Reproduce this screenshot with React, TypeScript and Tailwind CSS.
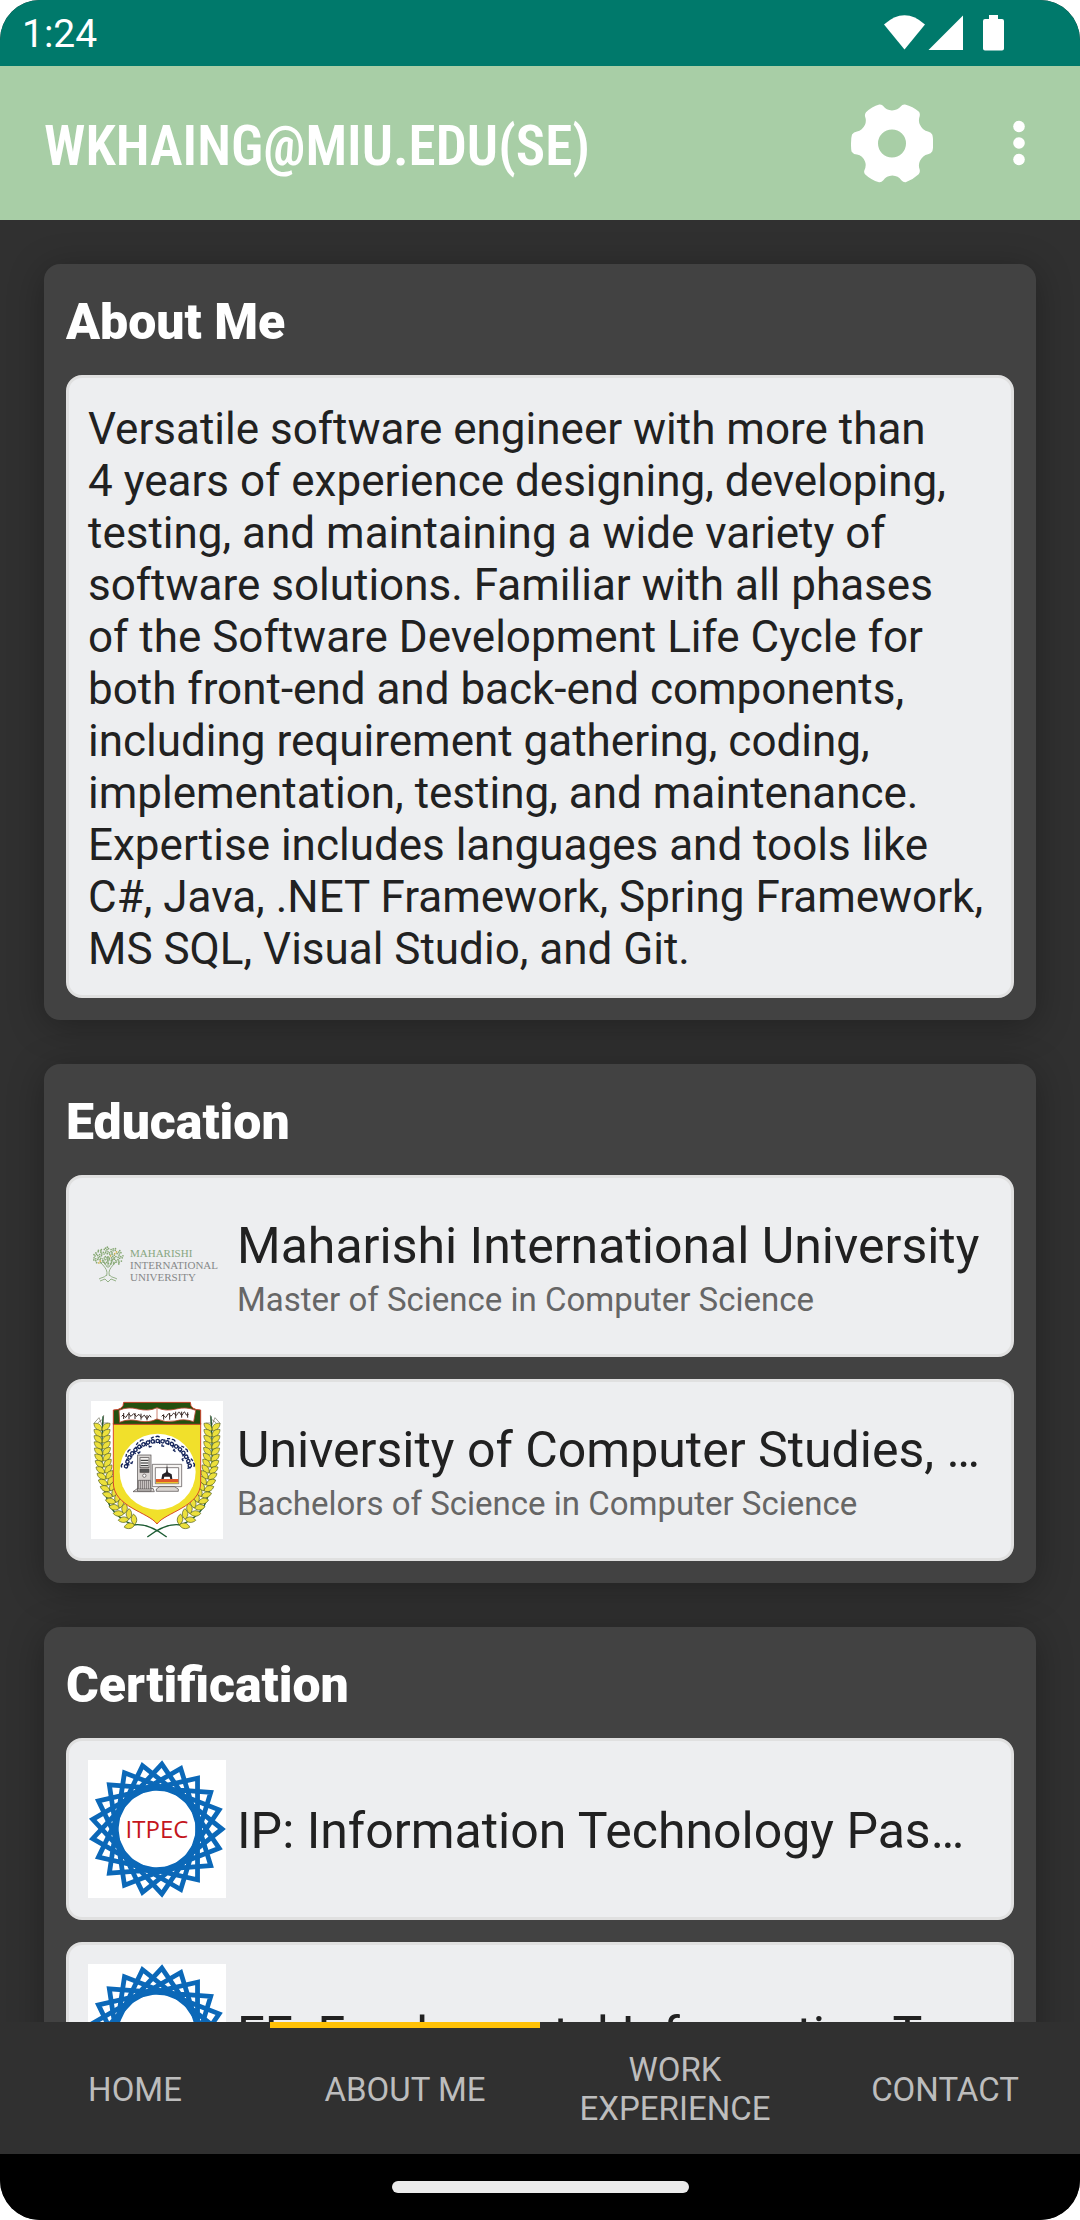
import type { ReactNode } from "react";

const aboutLines = [
  "Versatile software engineer with more than",
  "4 years of experience designing, developing,",
  "testing, and maintaining a wide variety of",
  "software solutions. Familiar with all phases",
  "of the Software Development Life Cycle for",
  "both front-end and back-end components,",
  "including requirement gathering, coding,",
  "implementation, testing, and maintenance.",
  "Expertise includes languages and tools like",
  "C#, Java, .NET Framework, Spring Framework,",
  "MS SQL, Visual Studio, and Git.",
];

/** Interlaced ring: three closed star polygons sharing 21 points. */
function starPath(start: number) {
  const points = Array.from({ length: 7 }, (_, i) => {
    const angle = ((start + i * 6) * 2 * Math.PI) / 21;
    return `${(69 + 65 * Math.cos(angle)).toFixed(2)} ${(69 + 65 * Math.sin(angle)).toFixed(2)}`;
  });
  return `M${points.join("L")}Z`;
}

function ItpecLogo() {
  return (
    <svg viewBox="0 0 138 138" className="size-[138px]" role="img" aria-label="ITPEC">
      <rect width="138" height="138" fill="#fff" />
      <g fill="none" stroke="#0b68b8" strokeWidth="4.8" strokeMiterlimit="10">
        {[0, 1, 2].map((s) => (
          <path key={s} d={starPath(s)} />
        ))}
        <circle cx="69" cy="69" r="42" strokeWidth="5" />
      </g>
      <text x="69" y="78" textAnchor="middle" fill="#c4161c" className="font-['Open_Sans',sans-serif] text-[24px] font-medium">
        ITPEC
      </text>
    </svg>
  );
}

const leafDots = Array.from({ length: 130 }, (_, i) => {
  const t = (i * 137.5 * Math.PI) / 180;
  const r = Math.sqrt(i / 130);
  const x = 20 + 15.5 * r * Math.cos(t);
  const y = 11 + 10 * r * Math.sin(t);
  return { x, y, gold: i % 17 === 5 };
}).filter((d, i) => i % 5 !== 2 && d.y < 18);

function MiuLogo() {
  return (
    <svg viewBox="0 0 138 40" className="h-10 w-[138px]" role="img" aria-label="Maharishi International University">
      <g fill="none" stroke="#8aa97a" strokeWidth="0.9">
        <path d="M18.500 30C20 25 18 22 12 16M21.500 30C20 25 22 22 28 16M20 22V10M19 21L14 12M21 21L26 12" />
        <path d="M18.500 29C16 32 14 31 11 33M21.500 29C24 32 26 31 29 33M12 35L17 33L20 36L23 33L28 35" />
      </g>
      {leafDots.map((d, i) => (
        <circle key={i} cx={d.x} cy={d.y} r="0.85" fill={d.gold ? "#d2b24c" : "#86a873"} />
      ))}
      <g className="font-['Liberation_Serif',serif] text-[11px]">
        <text x="42" y="11" fill="#87a681">MAHARISHI</text>
        <text x="42" y="23" fill="#868889">INTERNATIONAL</text>
        <text x="42" y="35" fill="#868889">UNIVERSITY</text>
      </g>
    </svg>
  );
}

const wheat = Array.from({ length: 17 }, (_, i) => {
  const t = i / 16;
  return {
    x: 33 + 2 * t + 86 * Math.pow(t, 3.2),
    y: 76 + 296 * t - 8 * t * t,
    lean: -55 * Math.pow(t, 2.4),
  };
});

function WheatEar() {
  return (
    <g>
      <path d="M36 46C30 160 28 270 60 320Q80 352 126 372Q170 364 227 408" fill="none" stroke="#1d5c33" strokeWidth="4" />
      <path d="M36 72L38 42M33 72L24 50L8 68M37 66L52 66M33 56L20 66" fill="none" stroke="#3b3a20" strokeWidth="1.5" />
      {wheat.map((w, i) => (
        <g key={i} transform={`translate(${w.x.toFixed(1)} ${w.y.toFixed(1)}) rotate(${w.lean.toFixed(1)})`}>
          <path d="M0 12C-14 15 -24 4 -24 -9C-10 -11 0 -4 0 12Z" fill="#ece03c" stroke="#56621f" strokeWidth="2" />
          <path d="M0 12C14 15 24 4 24 -9C10 -11 0 -4 0 12Z" fill="#ece03c" stroke="#56621f" strokeWidth="2" />
        </g>
      ))}
    </g>
  );
}

const arcMarks = Array.from({ length: 19 }, (_, i) => {
  const deg = -168 + i * 8.6;
  const a = (deg * Math.PI) / 180;
  return { x: 201 + 98 * Math.cos(a), y: 216 + 96 * Math.sin(a), deg: deg + 90 };
});

function UniversityCrest() {
  return (
    <svg viewBox="0 0 396 414" className="h-[138px] w-[132px]" role="img" aria-label="University of Computer Studies crest">
      <rect width="396" height="414" fill="#fff" />
      <WheatEar />
      <g transform="translate(396 0) scale(-1 1)">
        <WheatEar />
      </g>
      <path d="M67 66H329V245C329 318 222 334 198 369C174 334 67 318 67 245Z" fill="#f1e02b" stroke="#d8472b" strokeWidth="3" />
      <path d="M67 70V27Q98 27 98 4H298Q298 27 329 27V70Z" fill="#24500f" stroke="#c8402a" strokeWidth="3" />
      <path d="M84 28Q110 16 140 24Q175 32 198 20Q222 32 256 24Q286 16 314 28L308 62Q280 52 252 60Q222 66 198 54Q175 66 144 60Q112 52 86 64Z" fill="#fff" stroke="#b5452f" strokeWidth="2.5" />
      <path d="M198 20V54" stroke="#b5452f" strokeWidth="2" />
      <g fill="none" stroke="#33231f" strokeWidth="3">
        <path d="M92 46q4 -8 8 0t8 -2t8 -2t8 0t8 0t8 1t8 2t8 1t8 2t8 0t8 1M98 36v18M114 34v20M132 36v18M150 38v18M168 42v16" />
        <path d="M212 46q4 -8 8 0t8 -2t8 -2t8 -1t8 -1t8 -2t8 0t8 0t8 0t8 1M218 40v16M236 36v20M254 32v20M272 32v18M290 34v16" />
      </g>
      <circle cx="200" cy="212" r="114" fill="#fff" />
      <g fill="none" stroke="#16265c" strokeWidth="4">
        {arcMarks.map((m, i) => (
          <g key={i} transform={`translate(${m.x.toFixed(1)} ${m.y.toFixed(1)}) rotate(${m.deg.toFixed(1)})`}>
            <circle r="5" />
            <path d={i % 3 === 0 ? "M-6 -12Q0 -17 6 -11M6 -2V9" : i % 3 === 1 ? "M0 9V14H7M5 -6L8 -1" : "M-4 -10L5 -13M5 0V7"} />
          </g>
        ))}
      </g>
      <g stroke="#4b4646" strokeWidth="2" fill="#d9d5d2">
        <path d="M126 272L140 262H186L190 272Z" />
        <rect x="140" y="162" width="40" height="108" />
        <rect x="147" y="170" width="27" height="30" fill="#f4f2f0" />
        <path d="M149 178H172M149 186H172M149 194H172" stroke="#222" strokeWidth="3" />
        <rect x="147" y="204" width="27" height="10" fill="#555" />
        <circle cx="160" cy="224" r="5" fill="#fff" />
        <path d="M142 238H178V264H142ZM148 238V264M154 238V264M160 238V264M166 238V264M172 238V264" />
        <path d="M184 190H272V257H184Z" fill="#f6f4f2" />
        <path d="M193 200H263V248H193Z" fill="#fff" />
        <path d="M206 257L196 264V271H262V264L250 257Z" />
      </g>
      <path d="M195 234H262V243H195Z" fill="#df5a2b" />
      <path d="M195 243H262V247H195Z" fill="#e9c22c" />
      <path d="M228 188L231 214L242 220L244 234H238L236 227H220L218 234H211L214 220L225 214Z" fill="#262226" />
    </svg>
  );
}

function Section({ title, children }: { title: string; children: ReactNode }) {
  return (
    <section className="rounded-2xl bg-[#424242] px-[22px] pt-7 pb-[22px] shadow-[0_6px_36px_rgba(0,0,0,0.3)]">
      <h2 className="mb-[23px] text-[50px] leading-[60px] font-black text-white">{title}</h2>
      <div className="flex flex-col gap-[22px]">{children}</div>
    </section>
  );
}

function Item({ logo, title, subtitle }: { logo: ReactNode; title: string; subtitle?: string }) {
  return (
    <article className="flex items-center gap-[11px] rounded-2xl border-[3px] border-[#e0e0e0] bg-[#edeef0] p-[19px]">
      <div className="flex h-[138px] w-[138px] shrink-0 items-center justify-center">{logo}</div>
      <div className={subtitle ? "min-w-0 flex-1 pt-2.5 pr-2" : "min-w-0 flex-1 pt-1 pr-2"}>
        <h3 className="truncate text-[50px] leading-[58px] text-[#212121]">{title}</h3>
        {subtitle && <p className="truncate text-[33px] leading-[50px] text-[#666666]">{subtitle}</p>}
      </div>
    </article>
  );
}

const tabs = ["HOME", "ABOUT ME", "WORK EXPERIENCE", "CONTACT"];

export default function App() {
  return (
    <div className="bg-white">
      <div className="flex h-screen flex-col overflow-hidden rounded-[40px] bg-[#303030] font-['Roboto',sans-serif]">
        <div className="flex h-[66px] shrink-0 items-center justify-between bg-[#00796b] pr-[76px] pl-[22px] text-white">
          <span className="pt-0.5 text-[39px] leading-[46px]">1:24</span>
          <svg viewBox="0 0 120 36" className="h-9 w-[120px]" fill="#fff" aria-hidden="true">
            <path d="M0 9.500Q20.500 -9 41 9.500L20.500 34.500Z" />
            <path d="M79 .5V35H44.500Z" />
            <path d="M105 0H114V4H118Q120 4 120 6V33.500Q120 35.500 118 35.500H101Q99 35.500 99 33.500V6Q99 4 101 4H105Z" />
          </svg>
        </div>

        <header className="flex h-[154px] shrink-0 items-center bg-[#a8cea6] pr-[43px] pl-11 text-white">
          <h1 className="min-w-0 flex-1 truncate pt-1.5 font-['Roboto_Condensed','Roboto',sans-serif] text-[55px] leading-[64px] font-semibold">
            WKHAING@MIU.EDU(SE)
          </h1>
          <button type="button" aria-label="Settings" className="mr-[68px]">
            <svg viewBox="0 0 246 236" className="h-[79px] w-[82px]" fill="#fff" fillRule="evenodd">
              <path d="M85 1Q93 0 98 7Q105 18 123 19Q141 18 149 7Q154 0 162 1Q186 7 203 22Q208 27 206 36Q201 50 207 62Q215 80 231 82Q241 84 244 92Q247 104 246 118Q247 132 244 141Q240 148 231 150Q215 153 207 170Q201 183 206 196Q208 205 203 210Q186 226 164 234Q157 235 151 228Q142 215 124 214Q106 215 97 228Q91 235 84 234Q60 227 42 210Q38 205 40 199Q47 184 42 172Q35 154 18 151Q7 151 2 143Q0 136 0 118Q0 100 3 91Q8 83 18 82Q34 79 42 62Q47 50 42 36Q41 29 45 24Q62 8 85 1ZM123 76A42 42 0 1 0 123 160A42 42 0 1 0 123 76Z" />
            </svg>
          </button>
          <button type="button" aria-label="More options" className="px-3">
            <svg viewBox="0 0 12 46" className="h-[46px] w-3" fill="#fff">
              <circle cx="6" cy="6.500" r="5.800" />
              <circle cx="6" cy="23" r="5.800" />
              <circle cx="6" cy="39.500" r="5.800" />
            </svg>
          </button>
        </header>

        <main className="flex min-h-0 flex-1 flex-col gap-11 overflow-hidden px-11 pt-11 *:shrink-0">
          <Section title="About Me">
            <p className="rounded-2xl border-[3px] border-[#e0e0e0] bg-[#edeef0] px-[19px] pt-[25px] pb-5 text-[44px] leading-[52px] text-[#212121]">
              {aboutLines.map((line) => (
                <span key={line} className="block whitespace-nowrap">
                  {line}
                </span>
              ))}
            </p>
          </Section>
          <Section title="Education">
            <Item logo={<MiuLogo />} title="Maharishi International University" subtitle="Master of Science in Computer Science" />
            <Item logo={<UniversityCrest />} title="University of Computer Studies, Yangon" subtitle="Bachelors of Science in Computer Science" />
          </Section>
          <Section title="Certification">
            <Item logo={<ItpecLogo />} title="IP: Information Technology Passport" />
            <Item logo={<ItpecLogo />} title="FE: Fundamental Information Technology Engineer" />
          </Section>
        </main>

        <nav className="z-10 grid h-[132px] shrink-0 grid-cols-4 bg-[#303030] text-[33px] leading-[39px] text-[#bdbdbd]">
          {tabs.map((tab) => (
            <button
              key={tab}
              type="button"
              aria-current={tab === "ABOUT ME" ? "page" : undefined}
              className="border-t-[6px] border-transparent px-8 pb-1 aria-[current=page]:border-[#ffc107]"
            >
              {tab}
            </button>
          ))}
        </nav>
        <div className="flex h-[66px] shrink-0 items-center justify-center bg-black">
          <div className="h-3 w-[297px] rounded-full bg-[#ebebeb]" />
        </div>
      </div>
    </div>
  );
}
